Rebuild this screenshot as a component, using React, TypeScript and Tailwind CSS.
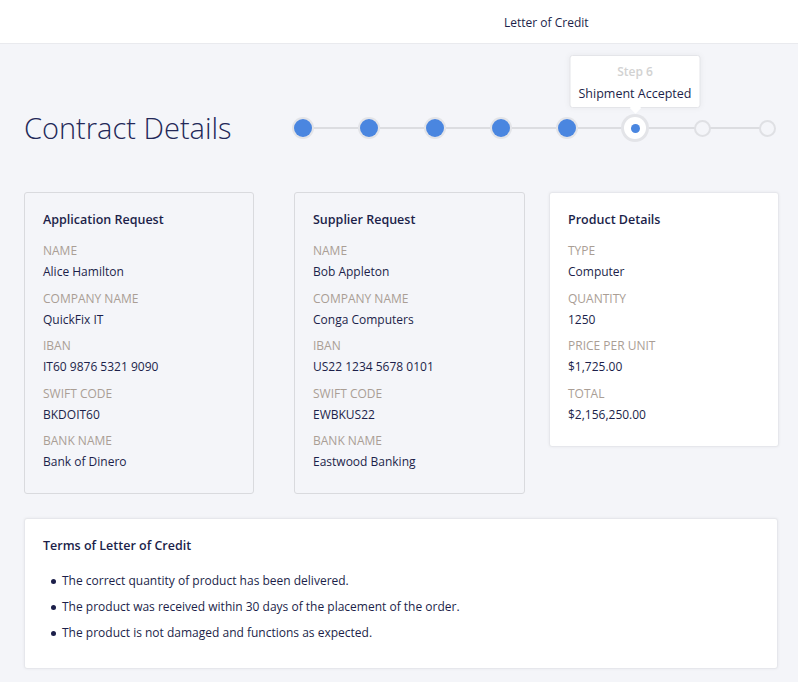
import React from "react";

const applicant = [
  { label: "Name", value: "Alice Hamilton" },
  { label: "Company Name", value: "QuickFix IT" },
  { label: "IBAN", value: "IT60 9876 5321 9090" },
  { label: "Swift Code", value: "BKDOIT60" },
  { label: "Bank Name", value: "Bank of Dinero" },
];

const supplier = [
  { label: "Name", value: "Bob Appleton" },
  { label: "Company Name", value: "Conga Computers" },
  { label: "IBAN", value: "US22 1234 5678 0101" },
  { label: "Swift Code", value: "EWBKUS22" },
  { label: "Bank Name", value: "Eastwood Banking" },
];

const product = [
  { label: "Type", value: "Computer" },
  { label: "Quantity", value: "1250" },
  { label: "Price Per Unit", value: "$1,725.00" },
  { label: "Total", value: "$2,156,250.00" },
];

const terms = [
  "The correct quantity of product has been delivered.",
  "The product was received within 30 days of the placement of the order.",
  "The product is not damaged and functions as expected.",
];

type Field = { label: string; value: string };

const DetailCard = ({
  title,
  fields,
  white,
  className,
}: {
  title: string;
  fields: Field[];
  white?: boolean;
  className?: string;
}) => (
  <div
    className={
      (white
        ? "bg-white border border-[#e6e7ec] shadow-[0_0_3px_rgba(0,0,0,0.06)] "
        : "bg-[#f4f5f9] border border-[#d9dade] ") +
      "shrink-0 rounded-[3px] pl-[18px] pr-4 pt-[19px] pb-[23px] " +
      (className ?? "")
    }
  >
    <h3 className="text-[12.5px] font-semibold text-[#1c1f4a] leading-4">{title}</h3>
    <div className="mt-[15px] flex flex-col">
      {fields.map((f, i) => (
        <div key={f.label} className={i > 0 ? "mt-[10.5px]" : ""}>
          <div className="text-[12px] uppercase text-[#aa9e95] leading-4">{f.label}</div>
          <div className="mt-[5px] text-[12px] text-[#1c1f4a] leading-4">{f.value}</div>
        </div>
      ))}
    </div>
  </div>
);

const Stepper = () => {
  const steps = [1, 2, 3, 4, 5, 6, 7, 8];
  return (
    <div className="relative flex w-[482px] items-center justify-between">
      <div className="absolute left-2 right-2 top-1/2 h-[2px] -translate-y-1/2 bg-[#dcdde1]" />
      {steps.map((s) => {
        if (s < 6)
          return (
            <div
              key={s}
              className="relative z-10 h-[18px] w-[18px] rounded-full bg-[#4a86e0] ring-2 ring-[#e3e4e8]"
            />
          );
        if (s === 6)
          return (
            <div key={s} className="relative z-10 flex h-[22px] w-[22px] items-center justify-center">
              <div className="absolute bottom-[31px] left-1/2 -translate-x-1/2 w-[131px] rounded-[3px] border border-[#e4e5e9] bg-white pt-[8px] pb-[5px] text-center shadow-[0_0_6px_rgba(0,0,0,0.05)]">
                <div className="text-[12px] font-semibold text-[#d2d2d2] leading-4">Step {s}</div>
                <div className="mt-[6px] text-[12.5px] text-[#1c1f4a] leading-4">Shipment Accepted</div>
                <div className="absolute -bottom-[5px] left-1/2 h-[8px] w-[8px] -translate-x-1/2 rotate-45 bg-white" />
              </div>
              <div className="flex h-[22px] w-[22px] items-center justify-center rounded-full bg-white ring-[3px] ring-[#e3e4e8]">
                <div className="h-[9px] w-[9px] rounded-full bg-[#4a86e0]" />
              </div>
            </div>
          );
        return (
          <div
            key={s}
            className="relative z-10 h-[17px] w-[17px] rounded-full border-2 border-[#dfe0e4] bg-[#f4f5f9]"
          />
        );
      })}
    </div>
  );
};

export default function App() {
  return (
    <div className="min-h-[682px] bg-[#f4f5f9] font-['Open_Sans',sans-serif] text-[#1c1f4a]">
      <header className="flex h-[44px] items-center border-b border-[#e9eaee] bg-white pt-[3px]">
        <div className="ml-[504px] text-[12px] text-[#1c1f4a]">Letter of Credit</div>
      </header>

      <div className="pl-[24px] pr-[20px]">
        <div className="mt-[66px] mb-[46px] flex h-[36px] w-full items-center justify-between">
          <h1 className="text-[29px] font-light leading-[36px] text-[#232858]">Contract Details</h1>
          <div className="mr-[2px]">
            <Stepper />
          </div>
        </div>

        <div className="flex items-start">
          <DetailCard title="Application Request" fields={applicant} className="w-[230px]" />
          <DetailCard title="Supplier Request" fields={supplier} className="ml-[40px] w-[231px]" />
          <DetailCard title="Product Details" fields={product} white className="ml-[24px] w-[230px]" />
        </div>

        <div className="mt-[24px] rounded-[3px] border border-[#e6e7ec] bg-white pl-[18px] pt-[19px] pb-[27px] shadow-[0_0_3px_rgba(0,0,0,0.06)]">
          <h3 className="text-[12.5px] font-semibold leading-4 text-[#1c1f4a]">Terms of Letter of Credit</h3>
          <ul className="mt-[19px] flex flex-col gap-[10px] pl-[8px]">
            {terms.map((t) => (
              <li key={t} className="flex items-center text-[12px] leading-4 text-[#1c1f4a]">
                <span className="mr-[6px] h-[5px] w-[5px] rounded-full bg-[#1c1f4a]" />
                {t}
              </li>
            ))}
          </ul>
        </div>
      </div>
    </div>
  );
}
